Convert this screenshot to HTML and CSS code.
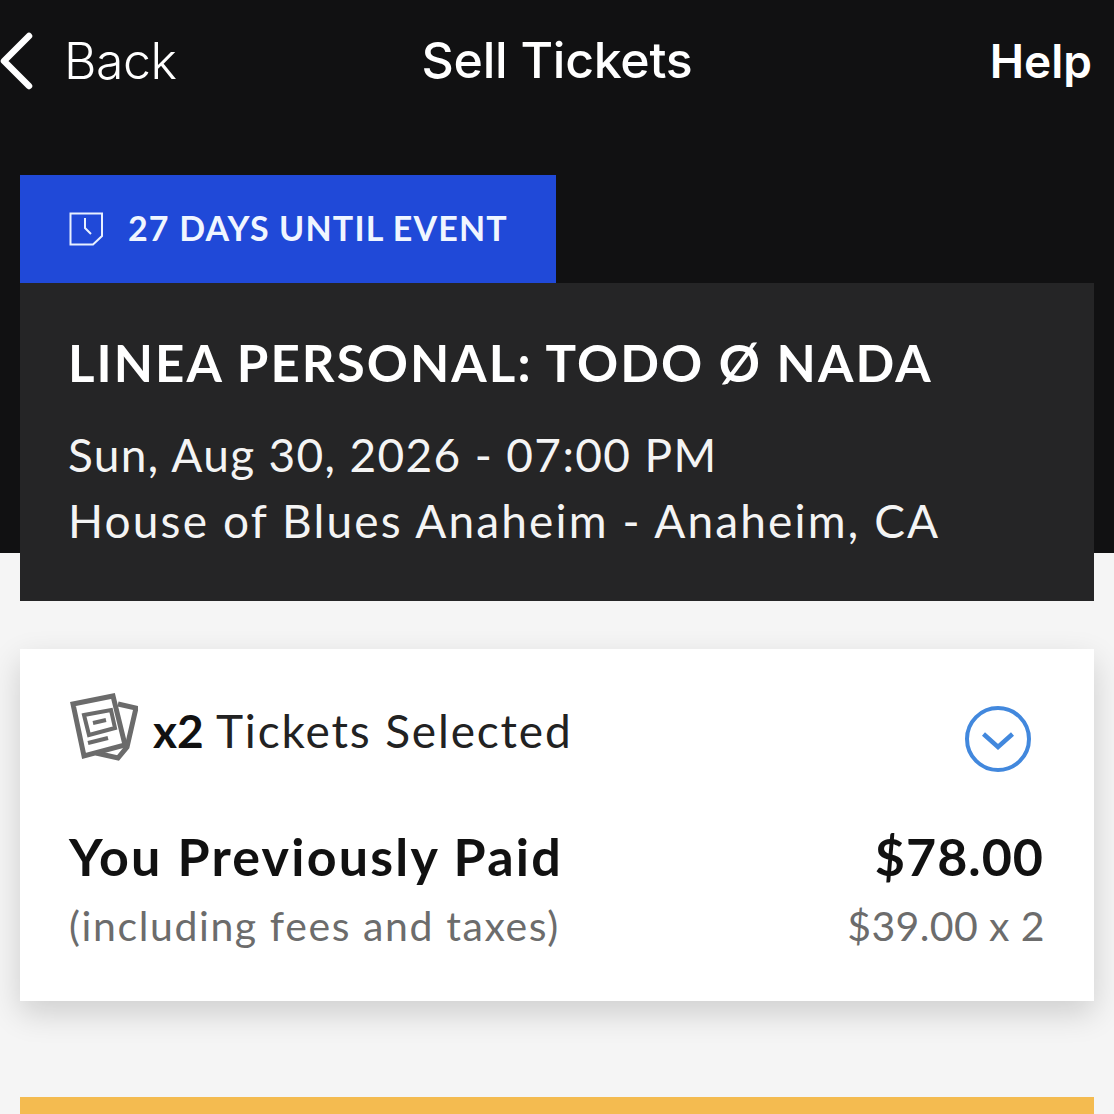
FILE: index.html
```html
<!DOCTYPE html>
<html lang="en">
<head>
<meta charset="utf-8">
<title>Sell Tickets</title>
<link rel="stylesheet" href="styles.css">
</head>
<body>
<header class="hero">
  <nav class="nav">
    <a class="back">
      <svg class="back-icon" width="34" height="58" viewBox="0 0 34 58"><path d="M29 4 4 29l25 25" fill="none" stroke="#fff" stroke-width="6.5" stroke-linecap="round" stroke-linejoin="round"/></svg>
      <span>Back</span>
    </a>
    <h1 class="nav-title">Sell Tickets</h1>
    <a class="help">Help</a>
  </nav>
  <div class="badge">
    <svg width="36" height="34" viewBox="0 0 36 34"><path d="M2.500 1.500H34V24L25 32.500H2.500Z" fill="none" stroke="#e8f0ff" stroke-width="2"/><path d="M17 6v10l6 6" fill="none" stroke="#e8f0ff" stroke-width="2"/></svg>
    <span class="badge-text">27 DAYS UNTIL EVENT</span>
  </div>
  <section class="event">
    <h2 class="event-name">LINEA PERSONAL: TODO Ø NADA</h2>
    <p class="event-line">Sun, Aug 30, 2026 - 07:00 PM</p>
    <p class="event-line venue">House of Blues Anaheim - Anaheim, CA</p>
  </section>
</header>
<main class="content">
  <section class="card">
    <div class="card-top">
      <div class="selected">
        <svg class="tickets-icon" width="68" height="68" viewBox="0 0 68 68"><path d="M48 11 66 15 57 54 48 65 26 60" fill="none" stroke="#6b6b6b" stroke-width="5"/><path d="M3 11 43 3 55 52 14 63Z" fill="#fff" stroke="#6b6b6b" stroke-width="5"/><path d="M14 22 41 17 45 35 19 42Z" fill="none" stroke="#6b6b6b" stroke-width="4"/><path d="M23 30 36 27" stroke="#6b6b6b" stroke-width="4"/><path d="M18 50 38 45" stroke="#6b6b6b" stroke-width="4"/></svg>
        <p class="selected-text"><b>x2</b> Tickets Selected</p>
      </div>
      <svg class="chevron" width="68" height="68" viewBox="0 0 68 68"><circle cx="34" cy="34" r="31" fill="none" stroke="#4288dd" stroke-width="4"/><path d="M19.500 29 34 42 48.500 29" fill="none" stroke="#4288dd" stroke-width="4.500"/></svg>
    </div>
    <div class="row paid">
      <span>You Previously Paid</span>
      <span class="amount">$78.00</span>
    </div>
    <div class="row note">
      <span>(including fees and taxes)</span>
      <span class="each">$39.00 x 2</span>
    </div>
  </section>
  <div class="notice"></div>
</main>
</body>
</html>
```
FILE: styles.css
```css
* { box-sizing: border-box; }
html, body { margin: 0; padding: 0; }
body {
  width: 1114px;
  height: 1114px;
  overflow: hidden;
  background: #f5f5f5;
  font-family: "Lato", "Liberation Sans", sans-serif;
}
.hero { height: 553px; background: #111112; }
.nav {
  height: 122px;
  display: grid;
  grid-template-columns: 1fr auto 1fr;
  align-items: center;
  color: #fff;
  font-family: "Inter", sans-serif;
}
.back {
  display: flex;
  align-items: center;
  gap: 30px;
  font-size: 50px;
  font-weight: 300;
  letter-spacing: -0.5px;
}
.nav-title {
  margin: 0 0 2px;
  font-size: 50px;
  font-weight: 500;
  letter-spacing: -0.25px;
}
.help { justify-self: end; margin-right: 22px; font-size: 46px; font-weight: 600; }
.badge {
  width: 536px;
  height: 108px;
  margin: 53px 0 0 20px;
  padding-left: 48px;
  display: flex;
  align-items: center;
  gap: 24px;
  background: #2049d8;
  color: #f0f6ff;
  font-size: 34px;
  font-weight: 700;
  letter-spacing: 1.15px;
}
.badge-text { margin-bottom: 3px; }
.event {
  width: 1074px;
  height: 318px;
  margin-left: 20px;
  padding: 50px 48px 0;
  background: #252526;
  color: #fff;
}
.event-name {
  margin: 0 0 29px;
  font-size: 51px;
  line-height: 60px;
  font-weight: 700;
  letter-spacing: 2.07px;
}
.event-line {
  margin: 0;
  font-size: 46px;
  line-height: 66px;
  letter-spacing: 1.35px;
  color: #f4f4f4;
}
.venue { letter-spacing: 2.15px; }
.content { padding: 96px 20px 0; }
.card {
  height: 352px;
  padding: 44px 49px 0;
  background: #fff;
  box-shadow: 0 12px 30px rgba(0, 0, 0, 0.16);
}
.card-top {
  display: flex;
  justify-content: space-between;
  align-items: flex-start;
  height: 132px;
}
.selected { display: flex; align-items: center; gap: 15px; margin-left: 1px; }
.selected-text {
  margin: 0;
  padding-top: 6px;
  font-size: 46px;
  letter-spacing: 1.85px;
  color: #222;
}
.selected-text b { font-weight: 700; color: #111; letter-spacing: 0; }
.chevron { margin: 12px 13px 0 0; }
.row { display: flex; justify-content: space-between; }
.paid {
  font-size: 52px;
  line-height: 62px;
  font-weight: 700;
  letter-spacing: 2.2px;
  color: #111;
}
.amount { margin-right: 1px; letter-spacing: 1px; }
.note {
  margin-top: 13px;
  font-size: 41px;
  line-height: 52px;
  letter-spacing: 1.6px;
  color: #6c6c6c;
}
.each { letter-spacing: 0.4px; }
.notice { height: 60px; margin-top: 96px; background: #f4bb50; }
```
